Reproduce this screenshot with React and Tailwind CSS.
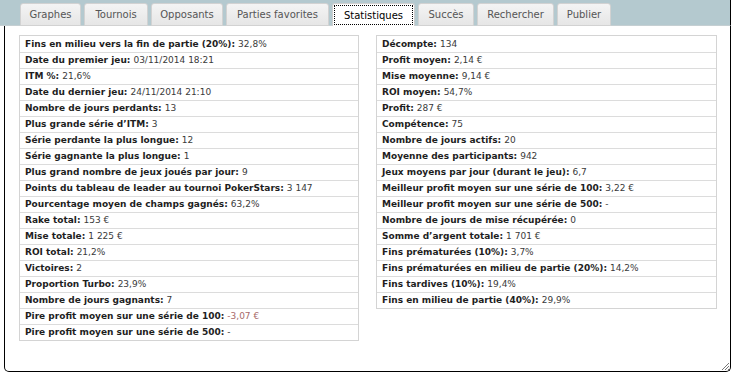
import React from "react";

const left = [
  ["Fins en milieu vers la fin de partie (20%)", "32,8%"],
  ["Date du premier jeu", "03/11/2014 18:21"],
  ["ITM %", "21,6%"],
  ["Date du dernier jeu", "24/11/2014 21:10"],
  ["Nombre de jours perdants", "13"],
  ["Plus grande série d’ITM", "3"],
  ["Série perdante la plus longue", "12"],
  ["Série gagnante la plus longue", "1"],
  ["Plus grand nombre de jeux joués par jour", "9"],
  ["Points du tableau de leader au tournoi PokerStars", "3 147"],
  ["Pourcentage moyen de champs gagnés", "63,2%"],
  ["Rake total", "153 €"],
  ["Mise totale", "1 225 €"],
  ["ROI total", "21,2%"],
  ["Victoires", "2"],
  ["Proportion Turbo", "23,9%"],
  ["Nombre de jours gagnants", "7"],
  ["Pire profit moyen sur une série de 100", "-3,07 €", true],
  ["Pire profit moyen sur une série de 500", "-"],
];

const right = [
  ["Décompte", "134"],
  ["Profit moyen", "2,14 €"],
  ["Mise moyenne", "9,14 €"],
  ["ROI moyen", "54,7%"],
  ["Profit", "287 €"],
  ["Compétence", "75"],
  ["Nombre de jours actifs", "20"],
  ["Moyenne des participants", "942"],
  ["Jeux moyens par jour (durant le jeu)", "6,7"],
  ["Meilleur profit moyen sur une série de 100", "3,22 €"],
  ["Meilleur profit moyen sur une série de 500", "-"],
  ["Nombre de jours de mise récupérée", "0"],
  ["Somme d’argent totale", "1 701 €"],
  ["Fins prématurées (10%)", "3,7%"],
  ["Fins prématurées en milieu de partie (20%)", "14,2%"],
  ["Fins tardives (10%)", "19,4%"],
  ["Fins en milieu de partie (40%)", "29,9%"],
];

const tabs = [
  ["Graphes", "w-[61px]"],
  ["Tournois", "w-[64px]"],
  ["Opposants", "w-[72px]"],
  ["Parties favorites", "w-[103px]"],
  ["Statistiques", "w-[83px]", true],
  ["Succès", "w-[56px]"],
  ["Rechercher", "w-[77px]"],
  ["Publier", "w-[54px]"],
];

function Table({ rows, className }) {
  return (
    <div className={"border border-[#d4d4d4] self-start " + className}>
      {rows.map(([k, v, neg], i) => (
        <div
          key={i}
          className={
            "h-[16px] flex items-center pl-[5px] whitespace-nowrap leading-none text-[9px] " +
            (i > 0 ? "border-t border-[#dcdcdc]" : "")
          }
        >
          <span className="font-bold text-[#1e1e1e]">{k}:</span>
          <span className={"ml-[3px] " + (neg ? "text-[#a86a6a]" : "text-[#3a3a3a]")}>{v}</span>
        </div>
      ))}
    </div>
  );
}

export default function App() {
  return (
    <div className="w-[733px] h-[374px] bg-white overflow-hidden" style={{ fontFamily: '"DejaVu Sans", Verdana, sans-serif' }}>
      <div className="w-[731px] h-[26px] bg-[#b4c9cf] border-r border-black flex items-end pl-[20px] gap-[3px] border-b border-b-[#c5cfd2]">
        {tabs.map(([t, w, active]) => (
          <div
            key={t}
            className={
              w +
              " h-[23px] rounded-t-[3px] flex items-center justify-center text-[10px] mb-[-1px] " +
              (active
                ? "bg-white text-black border-t border-l border-r border-[#cfcfcf] relative"
                : "bg-gradient-to-b from-[#f4f4f4] to-[#e6e6e6] border border-[#d2d2d2] text-[#555]")
            }
          >
            {active && (
              <div className="absolute left-[1px] right-[1px] top-[1px] bottom-[1px] border border-dotted border-black" />
            )}
            {t}
          </div>
        ))}
      </div>
      <div className="relative ml-[4px] w-[727px] h-[346px] border-l border-r border-b border-black rounded-b-[5px] flex pt-[9px] pl-[14px] gap-[17px]">
        <Table rows={left} className="w-[340px]" />
        <Table rows={right} className="w-[341px]" />
        <svg className="absolute right-[0px] bottom-[0px]" width="10" height="10" viewBox="0 0 10 10">
          <path d="M9 2 L2 9 M9 5 L5 9 M9 8 L8 9" stroke="#777" strokeWidth="1" />
        </svg>
      </div>
    </div>
  );
}
